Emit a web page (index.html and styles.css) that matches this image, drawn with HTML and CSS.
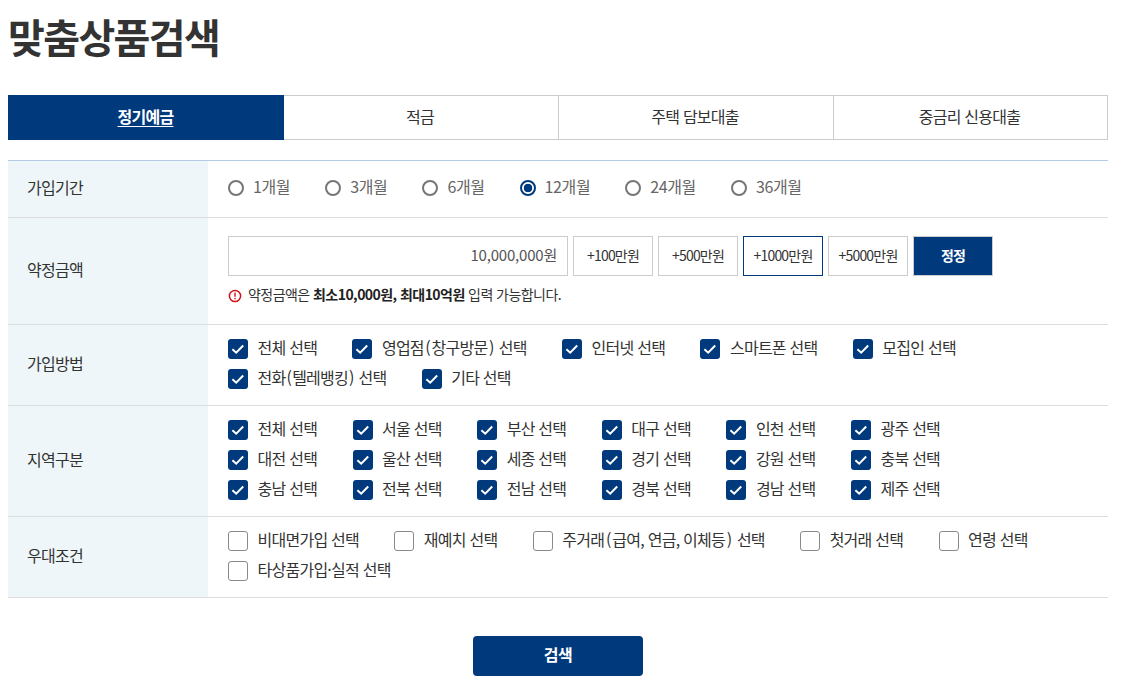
FILE: index.html
```html
<!DOCTYPE html>
<html lang="ko">
<head>
<meta charset="utf-8">
<title>맞춤상품검색</title>
<link rel="stylesheet" href="styles.css">
</head>
<body>
<svg class="defs" width="0" height="0" aria-hidden="true"><symbol id="tick" viewBox="0 0 20 20"><path d="M4.4 10.2l3.8 3.5 7-7.2" fill="none" stroke="#fff" stroke-width="2"/></symbol></svg>
<main class="page">
  <h1 class="title">맞춤상품검색</h1>
  <nav class="tabs">
    <a class="tab tab-active">정기예금</a>
    <a class="tab">적금</a>
    <a class="tab">주택 담보대출</a>
    <a class="tab">중금리 신용대출</a>
  </nav>
  <section class="table">
    <div class="row">
      <div class="label">가입기간</div>
      <div class="cell cell-radio">
        <label class="radio"><i class="dot"></i><span class="t">1개월</span></label>
        <label class="radio"><i class="dot"></i><span class="t">3개월</span></label>
        <label class="radio"><i class="dot"></i><span class="t">6개월</span></label>
        <label class="radio"><i class="dot dot-on"></i><span class="t">12개월</span></label>
        <label class="radio"><i class="dot"></i><span class="t">24개월</span></label>
        <label class="radio"><i class="dot"></i><span class="t">36개월</span></label>
      </div>
    </div>
    <div class="row">
      <div class="label">약정금액</div>
      <div class="cell cell-amount">
        <div class="amount-row">
          <div class="amount">10,000,000원</div>
          <button class="btn">+100만원</button>
          <button class="btn">+500만원</button>
          <button class="btn btn-focus">+1000만원</button>
          <button class="btn">+5000만원</button>
          <button class="btn btn-primary">정정</button>
        </div>
        <p class="notice">
          <svg class="notice-icon" viewBox="0 0 14 14" width="14" height="14"><circle cx="7" cy="7" r="5.6" fill="none" stroke="#d0121b" stroke-width="1.5"/><rect x="6.3" y="3.6" width="1.4" height="4.2" fill="#d0121b"/><rect x="6.3" y="8.8" width="1.4" height="1.5" fill="#d0121b"/></svg>
          <span class="t">약정금액은 <b>최소10,000원, 최대10억원</b> 입력 가능합니다.</span>
        </p>
      </div>
    </div>
    <div class="row">
      <div class="label">가입방법</div>
      <div class="cell checks">
        <label class="check"><i class="box box-on"><svg><use href="#tick"/></svg></i><span class="t">전체 선택</span></label>
        <label class="check"><i class="box box-on"><svg><use href="#tick"/></svg></i><span class="t">영업점<span class="p p-m">(</span>창구방문<span class="p p-m">)</span> 선택</span></label>
        <label class="check"><i class="box box-on"><svg><use href="#tick"/></svg></i><span class="t">인터넷 선택</span></label>
        <label class="check"><i class="box box-on"><svg><use href="#tick"/></svg></i><span class="t">스마트폰 선택</span></label>
        <label class="check"><i class="box box-on"><svg><use href="#tick"/></svg></i><span class="t">모집인 선택</span></label>
        <label class="check"><i class="box box-on"><svg><use href="#tick"/></svg></i><span class="t">전화<span class="p">(</span>텔레뱅킹<span class="p">)</span> 선택</span></label>
        <label class="check"><i class="box box-on"><svg><use href="#tick"/></svg></i><span class="t">기타 선택</span></label>
      </div>
    </div>
    <div class="row">
      <div class="label">지역구분</div>
      <div class="cell regions">
        <label class="check"><i class="box box-on"><svg><use href="#tick"/></svg></i><span class="t">전체 선택</span></label>
        <label class="check"><i class="box box-on"><svg><use href="#tick"/></svg></i><span class="t">서울 선택</span></label>
        <label class="check"><i class="box box-on"><svg><use href="#tick"/></svg></i><span class="t">부산 선택</span></label>
        <label class="check"><i class="box box-on"><svg><use href="#tick"/></svg></i><span class="t">대구 선택</span></label>
        <label class="check"><i class="box box-on"><svg><use href="#tick"/></svg></i><span class="t">인천 선택</span></label>
        <label class="check"><i class="box box-on"><svg><use href="#tick"/></svg></i><span class="t">광주 선택</span></label>
        <label class="check"><i class="box box-on"><svg><use href="#tick"/></svg></i><span class="t">대전 선택</span></label>
        <label class="check"><i class="box box-on"><svg><use href="#tick"/></svg></i><span class="t">울산 선택</span></label>
        <label class="check"><i class="box box-on"><svg><use href="#tick"/></svg></i><span class="t">세종 선택</span></label>
        <label class="check"><i class="box box-on"><svg><use href="#tick"/></svg></i><span class="t">경기 선택</span></label>
        <label class="check"><i class="box box-on"><svg><use href="#tick"/></svg></i><span class="t">강원 선택</span></label>
        <label class="check"><i class="box box-on"><svg><use href="#tick"/></svg></i><span class="t">충북 선택</span></label>
        <label class="check"><i class="box box-on"><svg><use href="#tick"/></svg></i><span class="t">충남 선택</span></label>
        <label class="check"><i class="box box-on"><svg><use href="#tick"/></svg></i><span class="t">전북 선택</span></label>
        <label class="check"><i class="box box-on"><svg><use href="#tick"/></svg></i><span class="t">전남 선택</span></label>
        <label class="check"><i class="box box-on"><svg><use href="#tick"/></svg></i><span class="t">경북 선택</span></label>
        <label class="check"><i class="box box-on"><svg><use href="#tick"/></svg></i><span class="t">경남 선택</span></label>
        <label class="check"><i class="box box-on"><svg><use href="#tick"/></svg></i><span class="t">제주 선택</span></label>
      </div>
    </div>
    <div class="row">
      <div class="label">우대조건</div>
      <div class="cell checks">
        <label class="check"><i class="box"></i><span class="t">비대면가입 선택</span></label>
        <label class="check"><i class="box"></i><span class="t">재예치 선택</span></label>
        <label class="check"><i class="box"></i><span class="t">주거래<span class="p p-l">(</span>급여, 연금, 이체등<span class="p p-l">)</span> 선택</span></label>
        <label class="check"><i class="box"></i><span class="t">첫거래 선택</span></label>
        <label class="check"><i class="box"></i><span class="t">연령 선택</span></label>
        <label class="check"><i class="box"></i><span class="t">타상품가입·실적 선택</span></label>
      </div>
    </div>
  </section>
  <div class="actions"><button class="search">검색</button></div>
</main>
</body>
</html>
```
FILE: styles.css
```css
* { box-sizing: border-box; }
html, body { margin: 0; padding: 0; background: #fff; }
body {
  font-family: "Noto Sans CJK KR", "Noto Sans", sans-serif;
  font-size: 16px;
  color: #333;
  letter-spacing: -0.75px;
}
.defs { position: absolute; }
.page { width: 1100px; margin-left: 8px; }
.title {
  margin: 0;
  height: 95px;
  padding-top: 7px;
  font-size: 40px;
  line-height: 58px;
  font-weight: 700;
  letter-spacing: -1.6px;
  color: #333;
}
.tabs { display: flex; height: 45px; }
.tab {
  flex: 0 0 275px;
  display: flex;
  align-items: center;
  justify-content: center;
  padding: 0 2px 3px 0;
  border: 1px solid #ccc;
  border-left: 0;
  color: #333;
}
.tab:last-child { flex-basis: 274px; }
.tab-active {
  flex-basis: 276px;
  padding-right: 0;
  background: #003a7c;
  border-color: #003a7c;
  color: #fff;
  font-weight: 700;
  text-decoration: underline;
  text-underline-offset: 3px;
}
.table { margin-top: 20px; border-top: 1px solid #b5cbe5; }
.row { display: flex; border-bottom: 1px solid #ddd; }
.label {
  flex: 0 0 200px;
  display: flex;
  align-items: center;
  padding: 0 0 4px 19px;
  background: #eef6f9;
  color: #333;
}
.cell { flex: 1; padding-left: 20px; }
.t { margin-bottom: 4px; }
.p { margin: 0 1px; }
.p-m { margin: 0 1.5px; }
.p-l { margin: 0 1.75px; }
.cell-radio { display: flex; align-items: center; height: 56px; padding-bottom: 2px; color: #666; gap: 35px; letter-spacing: -0.38px; }
.radio { display: flex; align-items: center; }
.dot {
  width: 16px;
  height: 16px;
  margin-right: 9px;
  border: 2px solid #767676;
  border-radius: 50%;
  background: #fff;
}
.dot-on {
  border-color: #003a7c;
  background: radial-gradient(circle, #003a7c 0 4px, #fff 4.6px);
}
.cell-amount { padding-top: 18px; padding-bottom: 17px; }
.amount-row { display: flex; gap: 5px; height: 40px; }
.amount {
  flex: 0 0 340px;
  display: flex;
  align-items: center;
  justify-content: flex-end;
  padding: 0 10px 4px 0;
  border: 1px solid #ccc;
  color: #555;
  font-size: 15px;
  letter-spacing: -0.2px;
}
.btn {
  flex: 0 0 80px;
  padding: 0 0 2px;
  border: 1px solid #ccc;
  background: #fff;
  color: #333;
  font: inherit;
  font-size: 14px;
  letter-spacing: -0.8px;
}
.btn-focus { border-color: #003a7c; }
.btn-primary { background: #003a7c; color: #fff; font-weight: 700; }
.notice {
  display: flex;
  align-items: center;
  gap: 6px;
  margin: 9px 0 0;
  height: 22px;
  font-size: 14px;
  letter-spacing: -0.55px;
}
.notice-icon { flex: none; }
.notice b { font-weight: 700; color: #222; }
.checks { display: flex; flex-wrap: wrap; column-gap: 35.3px; row-gap: 10px; padding-top: 14px; padding-bottom: 16px; align-content: flex-start; }
.regions { display: grid; grid-template-columns: repeat(6, 124.6px); row-gap: 10px; padding-top: 14px; padding-bottom: 16px; }
.check { display: flex; align-items: center; height: 20px; }
.box {
  display: block;
  flex: none;
  width: 20px;
  height: 20px;
  margin-right: 9.5px;
  border: 1px solid #8a8a8a;
  border-radius: 3px;
  background: #fff;
}
.box-on { border: 0; background: #003a7c; }
.box svg { display: block; width: 20px; height: 20px; }
.actions { display: flex; justify-content: center; padding-top: 38px; }
.search {
  width: 170px;
  height: 40px;
  padding: 0 0 5px;
  border: 0;
  border-radius: 4px;
  background: #003a7c;
  color: #fff;
  font: inherit;
  font-weight: 700;
  letter-spacing: -0.5px;
}
```
